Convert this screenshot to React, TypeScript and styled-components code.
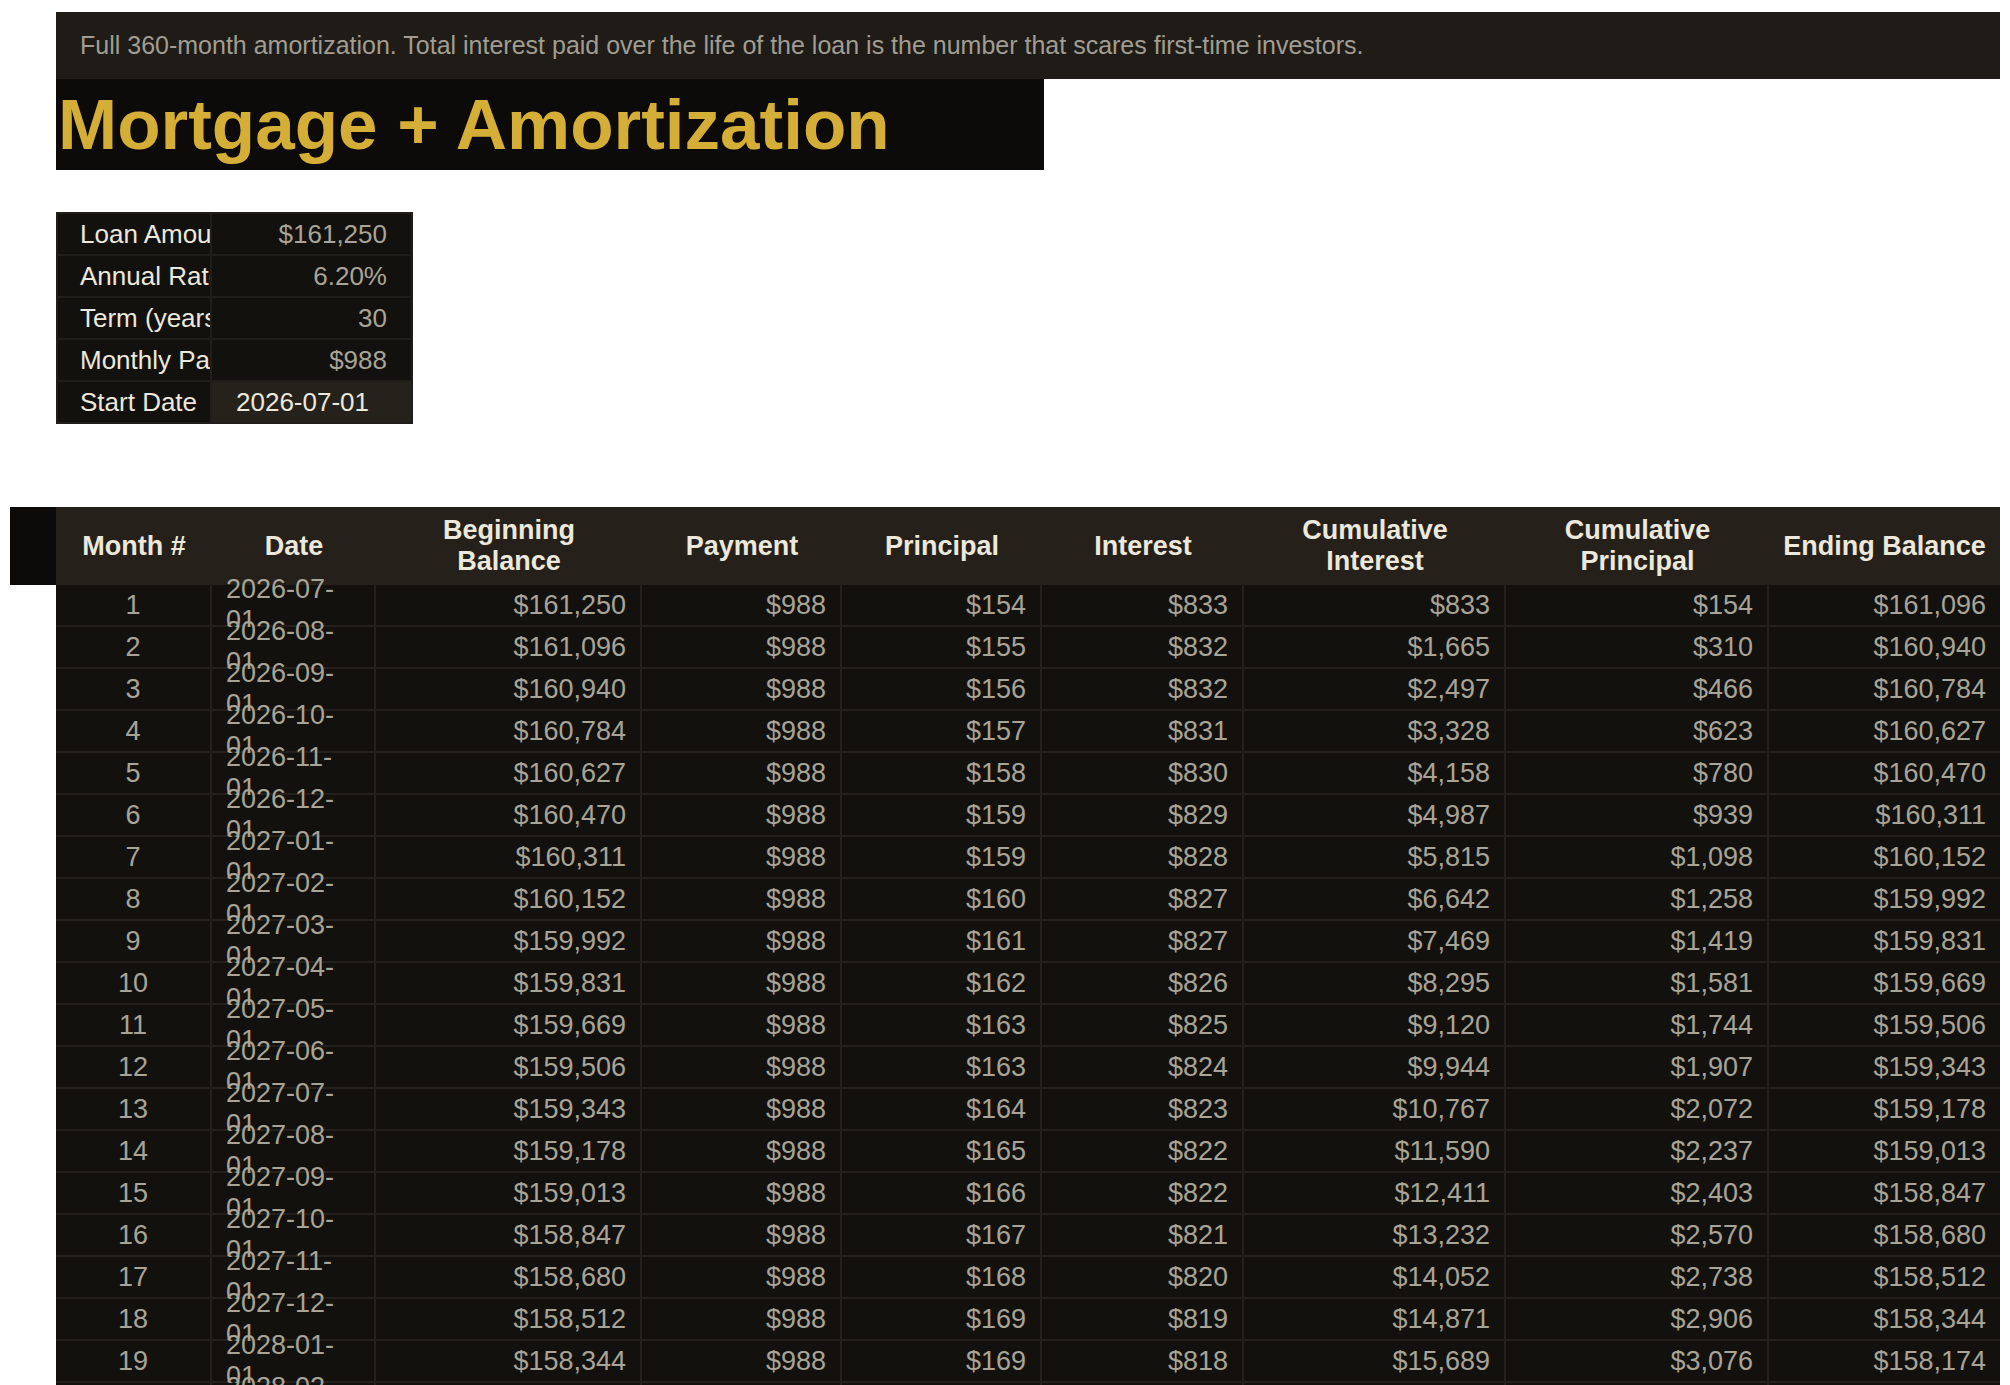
import { Fragment } from 'react';
import styled, { createGlobalStyle } from 'styled-components';

const Global = createGlobalStyle`
  body { margin: 0; background: #fff; font-family: "Liberation Sans", Arial, sans-serif; }
`;

const Page = styled.div`
  padding: 12px 10px 0 56px;
  width: 2010px;
  box-sizing: border-box;
  height: 1385px;
  overflow: hidden;
`;

const Banner = styled.div`
  background: #1f1c17;
  height: 67px;
  display: flex;
  align-items: center;
  padding-left: 24px;
  color: #a19d92;
  font-size: 25px;
`;

const TitleBar = styled.div`
  background: #0c0b09;
  width: 988px;
  height: 91px;
  display: flex;
  align-items: center;
  color: #d4ae36;
  font-weight: 700;
  font-size: 71px;
  padding-left: 2px;
  box-sizing: border-box;
`;

const Params = styled.div`
  margin-top: 42px;
  width: 353px;
  display: grid;
  grid-template-columns: 154px 1fr;
  background: #12110e;
  border: 2px solid #201e1a;
`;

const PLabel = styled.div<{ $last?: boolean }>`
  height: 40px;
  display: flex;
  align-items: center;
  padding-left: 22px;
  color: #ece8dc;
  font-size: 26px;
  white-space: nowrap;
  overflow: hidden;
  border-bottom: ${p => (p.$last ? 'none' : '2px solid #201e1a')};
  border-right: 2px solid #201e1a;
`;

const PValue = styled.div<{ $input?: boolean }>`
  height: 40px;
  display: flex;
  align-items: center;
  justify-content: ${p => (p.$input ? 'flex-start' : 'flex-end')};
  padding: 0 24px;
  font-size: 26px;
  color: ${p => (p.$input ? '#ece8dc' : '#a8a497')};
  background: ${p => (p.$input ? '#25211b' : 'transparent')};
  border-bottom: ${p => (p.$input ? 'none' : '2px solid #201e1a')};
`;

const TableWrap = styled.div`
  margin-top: 83px;
  margin-left: -46px;
  display: flex;
`;

const Strip = styled.div`
  width: 46px;
  height: 78px;
  background: #0c0b09;
  flex-shrink: 0;
`;

const Grid = styled.div`
  display: grid;
  grid-template-columns: 156px 164px 266px 200px 200px 202px 262px 263px 231px;
  width: 1944px;
`;

const Head = styled.div`
  background: #25201a;
  height: 78px;
  display: flex;
  align-items: center;
  justify-content: center;
  text-align: center;
  color: #ece8dc;
  font-weight: 700;
  font-size: 27px;
  line-height: 31px;
  white-space: pre-line;
`;

const Cell = styled.div<{ $align: string }>`
  height: 40px;
  background: #12110e;
  border-right: 2px solid #24211c;
  border-bottom: 2px solid #24211c;
  display: flex;
  align-items: center;
  justify-content: ${p => p.$align};
  padding: 0 14px;
  color: #a8a497;
  font-size: 27px;
  &:nth-child(9n) { border-right: none; }
`;

const headers = ['Month #', 'Date', 'Beginning\nBalance', 'Payment', 'Principal', 'Interest', 'Cumulative\nInterest', 'Cumulative\nPrincipal', 'Ending Balance'];

const fmt = (n: number) => '$' + Math.round(n).toLocaleString('en-US');

function buildRows() {
  const P = 161250, r = 0.062 / 12, n = 360;
  const pay = (P * r) / (1 - Math.pow(1 + r, -n));
  let bal = P, ci = 0, cp = 0;
  const rows: string[][] = [];
  for (let i = 1; i <= 20; i++) {
    const int = bal * r;
    const pr = pay - int;
    ci += int; cp += pr;
    const end = bal - pr;
    const m = 6 + i;
    const y = 2026 + Math.floor((m - 1) / 12);
    const mm = ((m - 1) % 12) + 1;
    rows.push([String(i), `${y}-${String(mm).padStart(2, '0')}-01`, fmt(bal), fmt(pay), fmt(pr), fmt(int), fmt(ci), fmt(cp), fmt(end)]);
    bal = end;
  }
  return rows;
}

const params: [string, string][] = [
  ['Loan Amount', '$161,250'],
  ['Annual Rate', '6.20%'],
  ['Term (years)', '30'],
  ['Monthly Payment', '$988'],
];

export default function App() {
  const rows = buildRows();
  return (
    <Page>
      <Global />
      <Banner>Full 360-month amortization. Total interest paid over the life of the loan is the number that scares first-time investors.</Banner>
      <TitleBar>Mortgage + Amortization</TitleBar>
      <Params>
        {params.map(([l, v]) => (
          <Fragment key={l}>
            <PLabel>{l}</PLabel>
            <PValue>{v}</PValue>
          </Fragment>
        ))}
        <PLabel $last>Start Date</PLabel>
        <PValue $input>2026-07-01</PValue>
      </Params>
      <TableWrap>
        <Strip />
        <Grid>
          {headers.map(h => (
            <Head key={h}>{h}</Head>
          ))}
          {rows.flatMap(r =>
            r.map((c, j) => (
              <Cell key={r[0] + '-' + j} $align={j < 2 ? 'center' : 'flex-end'}>{c}</Cell>
            ))
          )}
        </Grid>
      </TableWrap>
    </Page>
  );
}
